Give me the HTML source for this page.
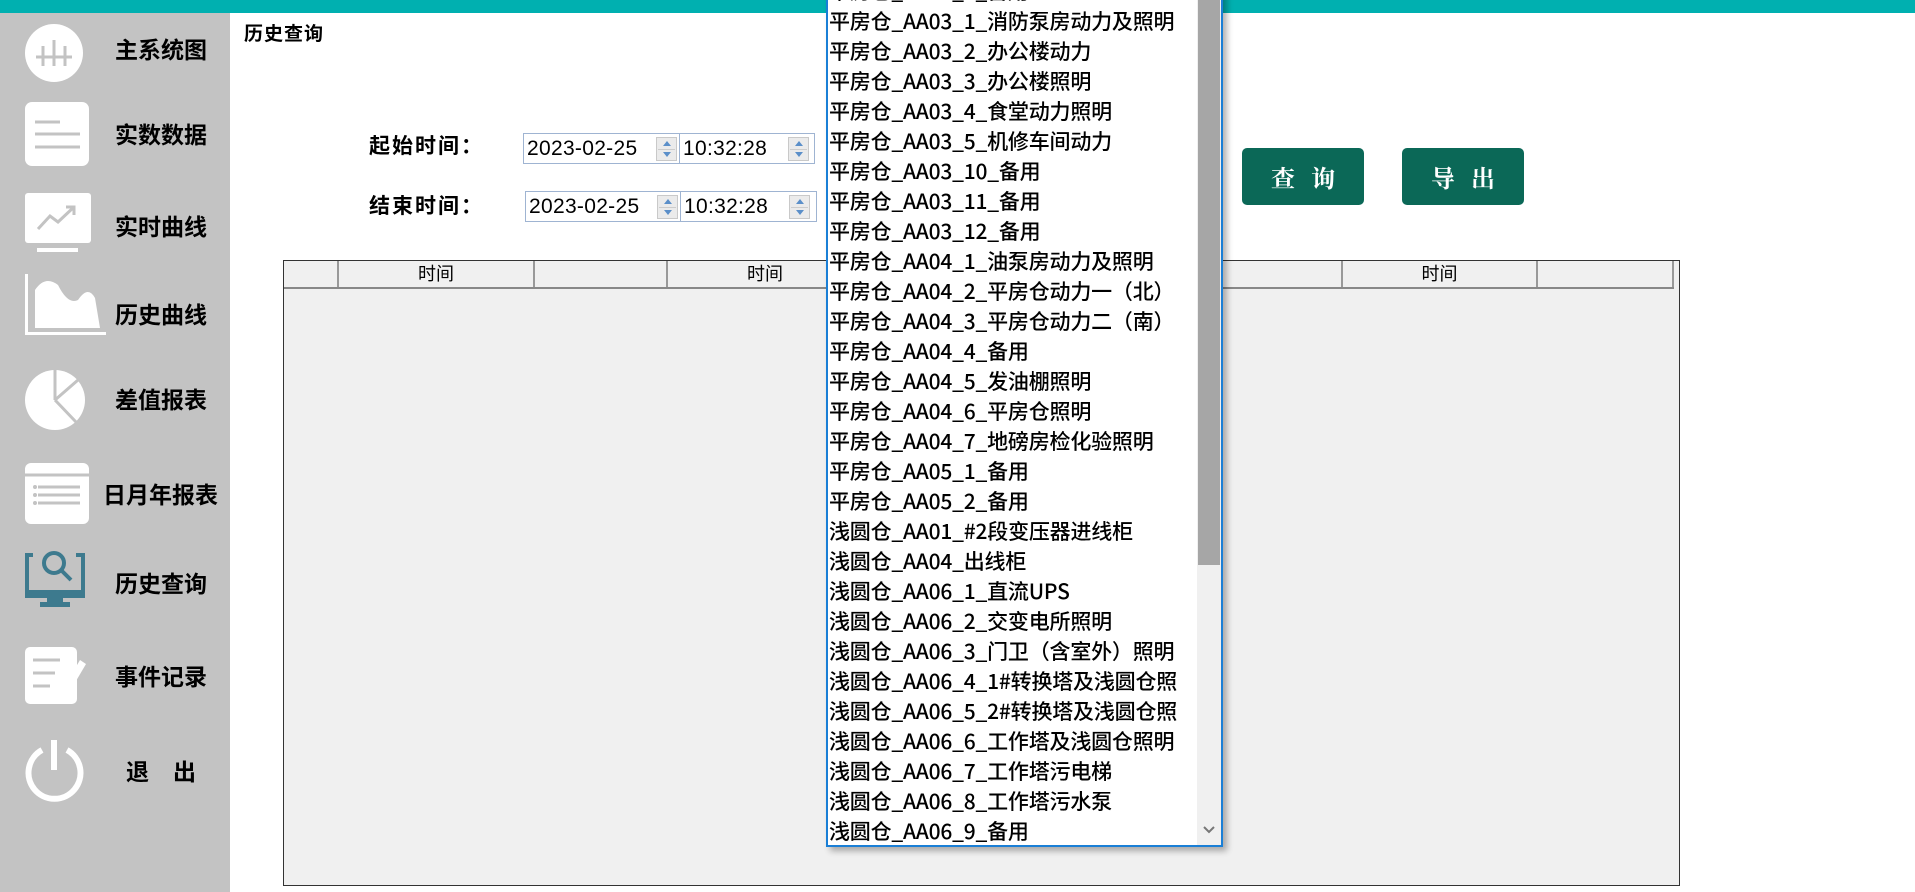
<!DOCTYPE html>
<html><head><meta charset="utf-8">
<style>
*{margin:0;padding:0;box-sizing:border-box}
body{width:1915px;height:892px;overflow:hidden;background:#fff;position:relative;font-family:"Liberation Sans","Noto Sans CJK SC",sans-serif;color:#000}
.abs{position:absolute}
#top{left:0;top:0;width:1915px;height:13px;background:#00b0b0}
#side{left:0;top:13px;width:230px;height:879px;background:#c3c3c3}
.nav{position:absolute;font-family:"Noto Sans CJK SC",sans-serif;font-weight:700;font-size:23px;line-height:30px;white-space:nowrap}
.lbl{font-family:"Noto Sans CJK SC",sans-serif;font-weight:700;font-size:21px;line-height:24px;letter-spacing:2px}
.box{position:absolute;border:1px solid #9fb4d2;background:#fff;height:31px;width:292px}
.box span{position:absolute;top:0;font-family:"Liberation Sans",sans-serif;font-size:21px;line-height:30px;letter-spacing:0.3px}
.spin{position:absolute;top:3px;width:21px;height:24px;background:#ebebeb;border:1px solid #c9c9c9}
.spin:before{content:"";position:absolute;left:6px;top:3px;border:4px solid transparent;border-bottom:5px solid #5b8fc9;border-top:0}
.spin:after{content:"";position:absolute;left:6px;top:14px;border:4px solid transparent;border-top:5px solid #5b8fc9;border-bottom:0}
.spin i{position:absolute;left:1px;right:1px;top:11px;height:1px;background:#ccc}
.btn{position:absolute;top:148px;width:122px;height:57px;background:#0b6857;border-radius:5px;color:#fff;font-family:"Noto Serif CJK SC",serif;font-weight:700;font-size:24px;line-height:57px;text-align:center;letter-spacing:16px;padding-left:16px}
#tbl{left:283px;top:260px;width:1397px;height:626px;border:1px solid #333;background:#f0f0f0}
#hdr{position:absolute;left:0;top:0;width:1390px;height:28px;border-bottom:2px solid #888}
.col{position:absolute;top:0;height:26px;border-right:2px solid #999;font-family:"Noto Sans CJK SC",sans-serif;font-size:18px;line-height:25px;text-align:center}
#dd{left:826px;top:-23px;width:397px;height:870px;background:#fff;border:2px solid #1a7fd6;box-shadow:4px 4px 6px rgba(0,0,0,.3);overflow:hidden}
#dd .it{position:absolute;left:1px;top:-3px;height:30px;font-family:"Noto Sans CJK SC",sans-serif;font-weight:500;font-size:21px;line-height:30px;white-space:nowrap;letter-spacing:-0.2px}
#sb{position:absolute;right:0;top:0;width:24px;height:866px;background:#f0f0f0}
#thumb{position:absolute;left:1px;top:0;width:22px;height:586px;background:#a6a6a6}
</style></head><body>
<div id="top" class="abs"></div>
<div id="side" class="abs"></div>
<svg class="abs" style="left:0;top:0" width="230" height="892">
<g fill="#fff">
<circle cx="54" cy="53" r="29"/>
<rect x="25" y="102" width="64" height="64" rx="7"/>
<rect x="25" y="193" width="66" height="50" rx="3"/>
<rect x="37" y="248" width="41" height="4"/>
<rect x="25" y="274" width="3" height="61"/><rect x="25" y="332" width="81" height="3"/>
<path d="M35 328 L35 290 Q45 275 58 285 Q68 305 78 300 Q88 285 95 298 L100 328 Z"/>
<circle cx="55" cy="400" r="30"/>
<rect x="25" y="463" width="64" height="61" rx="6"/>
<rect x="25" y="647" width="52" height="57" rx="5"/>
<path d="M60 694 L80 660 L86 664 L66 698 L58 702 Z"/>
</g>
<g stroke="#c3c3c3" stroke-width="3" fill="none">
<path d="M36 57 H72 M43 46 V66 M54 40 V66 M65 46 V66"/>
<path d="M35 122 H60 M35 134 H80 M35 147 H80"/>
<path d="M38 229 L50 216 L58 222 L74 207 M66 207 H74 V215"/>
<path d="M55 400 V370 M55 400 L78 380 M55 400 L76 422"/>
<path d="M38 487 H80 M38 495 H80 M38 503 H80 M25 475 H89"/>
<path d="M33 660 H60 M33 673 H55 M33 686 H50"/>
</g>
<g fill="#c3c3c3"><circle cx="35" cy="487" r="2"/><circle cx="35" cy="495" r="2"/><circle cx="35" cy="503" r="2"/></g>
<path d="M42 750 A26 26 0 1 0 67 750" stroke="#fff" stroke-width="6" fill="none"/>
<rect x="51" y="740" width="6" height="30" fill="#fff"/>
<g fill="none" stroke="#3d7a8e" stroke-width="4">
<path d="M33 555 H27 V596 H83 V555 H76"/>
<circle cx="54" cy="563" r="10"/><path d="M61 570 L71 580"/>
</g>
<rect x="25" y="590" width="60" height="8" fill="#3d7a8e"/>
<rect x="47" y="597" width="16" height="6" fill="#3d7a8e"/><rect x="40" y="602" width="30" height="5" fill="#3d7a8e"/>
</svg>
<div class="nav" style="left:115px;top:33px">主系统图</div>
<div class="nav" style="left:115px;top:118px">实数数据</div>
<div class="nav" style="left:115px;top:210px">实时曲线</div>
<div class="nav" style="left:115px;top:298px">历史曲线</div>
<div class="nav" style="left:115px;top:383px">差值报表</div>
<div class="nav" style="left:103px;top:478px">日月年报表</div>
<div class="nav" style="left:115px;top:567px">历史查询</div>
<div class="nav" style="left:115px;top:660px">事件记录</div>
<div class="nav" style="left:126px;top:755px;letter-spacing:24px">退出</div>

<div class="abs lbl" style="left:244px;top:21px;font-size:19px;letter-spacing:1px">历史查询</div>
<div class="abs lbl" style="left:369px;top:133px">起始时间：</div>
<div class="abs lbl" style="left:369px;top:193px">结束时间：</div>
<div class="box" style="left:523px;top:133px">
<span style="left:3px">2023-02-25</span><div class="spin" style="left:132px"><i></i></div>
<div style="position:absolute;left:155px;top:0;width:1px;height:29px;background:#9fb4d2"></div>
<span style="left:159px">10:32:28</span><div class="spin" style="left:264px"><i></i></div></div>
<div class="box" style="left:525px;top:191px">
<span style="left:3px">2023-02-25</span><div class="spin" style="left:131px"><i></i></div>
<div style="position:absolute;left:154px;top:0;width:1px;height:29px;background:#9fb4d2"></div>
<span style="left:158px">10:32:28</span><div class="spin" style="left:263px"><i></i></div></div>

<div class="btn" style="left:1242px">查询</div>
<div class="btn" style="left:1402px">导出</div>

<div id="tbl" class="abs"><div id="hdr">
<div class="col" style="left:0;width:55px"></div>
<div class="col" style="left:55px;width:196px">时间</div>
<div class="col" style="left:251px;width:133px"></div>
<div class="col" style="left:384px;width:196px">时间</div>
<div class="col" style="left:580px;width:479px"></div>
<div class="col" style="left:1059px;width:195px">时间</div>
<div class="col" style="left:1254px;width:136px"></div>
</div></div>

<div id="dd" class="abs">
<div class="it" style="margin-top:0">平房仓_AA02_9_备用</div>
<div class="it" style="margin-top:30px">平房仓_AA03_1_消防泵房动力及照明</div>
<div class="it" style="margin-top:60px">平房仓_AA03_2_办公楼动力</div>
<div class="it" style="margin-top:90px">平房仓_AA03_3_办公楼照明</div>
<div class="it" style="margin-top:120px">平房仓_AA03_4_食堂动力照明</div>
<div class="it" style="margin-top:150px">平房仓_AA03_5_机修车间动力</div>
<div class="it" style="margin-top:180px">平房仓_AA03_10_备用</div>
<div class="it" style="margin-top:210px">平房仓_AA03_11_备用</div>
<div class="it" style="margin-top:240px">平房仓_AA03_12_备用</div>
<div class="it" style="margin-top:270px">平房仓_AA04_1_油泵房动力及照明</div>
<div class="it" style="margin-top:300px">平房仓_AA04_2_平房仓动力一（北）</div>
<div class="it" style="margin-top:330px">平房仓_AA04_3_平房仓动力二（南）</div>
<div class="it" style="margin-top:360px">平房仓_AA04_4_备用</div>
<div class="it" style="margin-top:390px">平房仓_AA04_5_发油棚照明</div>
<div class="it" style="margin-top:420px">平房仓_AA04_6_平房仓照明</div>
<div class="it" style="margin-top:450px">平房仓_AA04_7_地磅房检化验照明</div>
<div class="it" style="margin-top:480px">平房仓_AA05_1_备用</div>
<div class="it" style="margin-top:510px">平房仓_AA05_2_备用</div>
<div class="it" style="margin-top:540px">浅圆仓_AA01_#2段变压器进线柜</div>
<div class="it" style="margin-top:570px">浅圆仓_AA04_出线柜</div>
<div class="it" style="margin-top:600px">浅圆仓_AA06_1_直流UPS</div>
<div class="it" style="margin-top:630px">浅圆仓_AA06_2_交变电所照明</div>
<div class="it" style="margin-top:660px">浅圆仓_AA06_3_门卫（含室外）照明</div>
<div class="it" style="margin-top:690px">浅圆仓_AA06_4_1#转换塔及浅圆仓照</div>
<div class="it" style="margin-top:720px">浅圆仓_AA06_5_2#转换塔及浅圆仓照</div>
<div class="it" style="margin-top:750px">浅圆仓_AA06_6_工作塔及浅圆仓照明</div>
<div class="it" style="margin-top:780px">浅圆仓_AA06_7_工作塔污电梯</div>
<div class="it" style="margin-top:810px">浅圆仓_AA06_8_工作塔污水泵</div>
<div class="it" style="margin-top:840px">浅圆仓_AA06_9_备用</div>
<div id="sb"><div id="thumb"></div>
<svg style="position:absolute;left:5px;bottom:10px" width="14" height="10"><path d="M2 2 L7 7 L12 2" stroke="#777" stroke-width="2" fill="none"/></svg></div>
</div>
</body></html>
